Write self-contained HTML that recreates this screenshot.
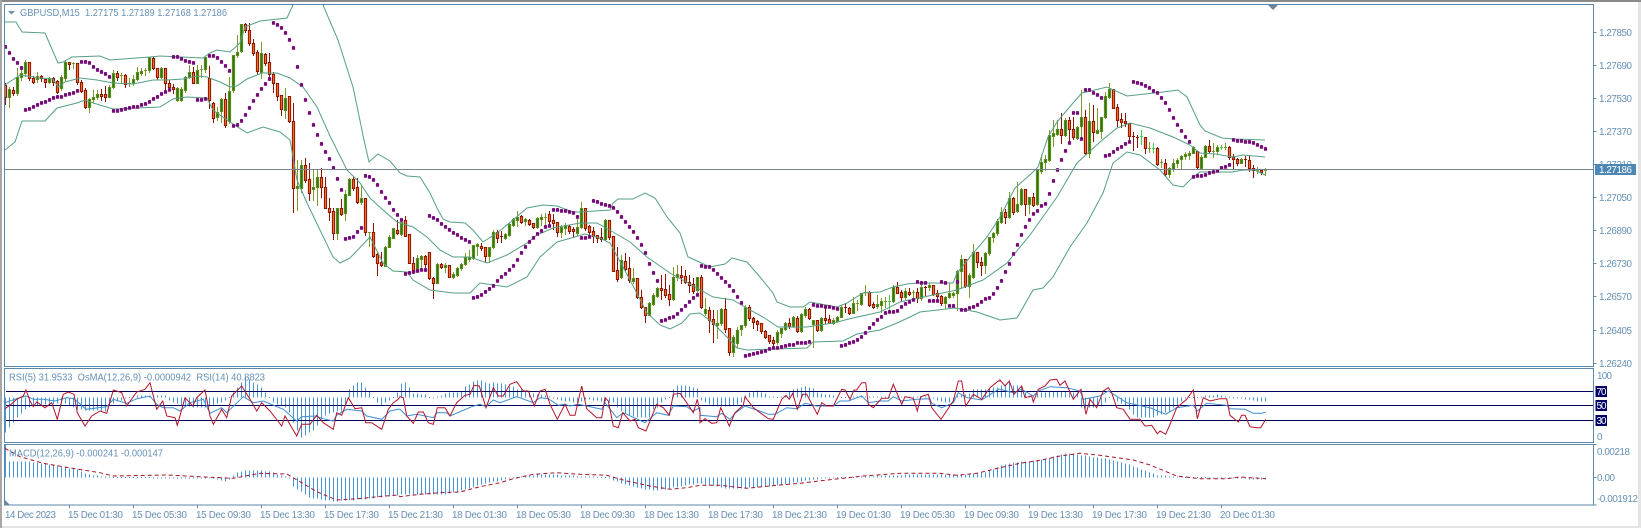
<!DOCTYPE html>
<html><head><meta charset="utf-8"><title>GBPUSD,M15</title>
<style>
html,body{margin:0;padding:0;background:#fff;width:1641px;height:528px;overflow:hidden}
svg{display:block;position:absolute;left:0;top:0;filter:blur(0.3px)}
text{font-family:"Liberation Sans",Arial,sans-serif;font-size:9.8px;fill:#6590b6;white-space:pre}
</style></head><body>
<svg width="1641" height="528" viewBox="0 0 1641 528" xmlns="http://www.w3.org/2000/svg">
<defs>
<clipPath id="cm"><rect x="5" y="5" width="1588" height="361"/></clipPath>
<clipPath id="cr"><rect x="5" y="369" width="1588" height="73"/></clipPath>
<clipPath id="cd"><rect x="5" y="445" width="1588" height="60"/></clipPath>
</defs>
<rect x="0" y="0" width="1641" height="2" fill="#8a8a8a"/>
<rect x="0" y="0" width="2" height="528" fill="#a8a8a8"/>
<rect x="1638" y="2" width="3" height="526" fill="#e4e4e4"/>
<rect x="2" y="526" width="1639" height="2" fill="#e4e4e4"/>
<g id="chart"></g>
<g fill="none" stroke="#5b88ab" stroke-width="1">
<rect x="4.5" y="4.5" width="1589" height="362"/>
<rect x="4.5" y="368.5" width="1589" height="74"/>
<rect x="4.5" y="444.5" width="1589" height="60.5"/>
<path d="M1593.5 32.5h3M1593.5 65.5h3M1593.5 98.5h3M1593.5 131.5h3M1593.5 164.5h3M1593.5 197.5h3M1593.5 230.5h3M1593.5 263.5h3M1593.5 296.5h3M1593.5 330.5h3M1593.5 363.5h3M1593.5 477.5h3M1593.5 505h3M1593.5 444.5h3M69.5 505v3M133.5 505v3M197.5 505v3M261.5 505v3M325.5 505v3M389.5 505v3M453.5 505v3M517.5 505v3M581.5 505v3M645.5 505v3M709.5 505v3M773.5 505v3M837.5 505v3M901.5 505v3M965.5 505v3M1029.5 505v3M1093.5 505v3M1157.5 505v3M1221.5 505v3"/>
</g>
<path d="M8 11h7l-3.5 3.5z" fill="#6c8fae"/>
<path d="M1268 5h10l-5 5z" fill="#6e8499"/>
<path d="M5 500l5 5h-5z" fill="#6e8499"/>
<text x="20" y="16" textLength="207" lengthAdjust="spacingAndGlyphs">GBPUSD,M15  1.27175 1.27189 1.27168 1.27186</text>
<text x="9" y="380.5" textLength="256" lengthAdjust="spacingAndGlyphs">RSI(5) 31.9533  OsMA(12,26,9) -0.0000942  RSI(14) 40.8823</text>
<text x="9" y="456.5" textLength="154" lengthAdjust="spacingAndGlyphs">MACD(12,26,9) -0.000241 -0.000147</text>
<g>
<text x="1599" y="36" textLength="33">1.27850</text>
<text x="1599" y="69" textLength="33">1.27690</text>
<text x="1599" y="102" textLength="33">1.27530</text>
<text x="1599" y="135" textLength="33">1.27370</text>
<text x="1599" y="168" textLength="33">1.27210</text>
<text x="1599" y="201" textLength="33">1.27050</text>
<text x="1599" y="234" textLength="33">1.26890</text>
<text x="1599" y="267" textLength="33">1.26730</text>
<text x="1599" y="300" textLength="33">1.26570</text>
<text x="1599" y="334" textLength="33">1.26405</text>
<text x="1599" y="367" textLength="33">1.26240</text>
</g>
<rect x="1595" y="164" width="41" height="11" fill="#4e87b4"/>
<text x="1599" y="173" textLength="33" style="fill:#fff">1.27186</text>
<text x="1597" y="379" textLength="15">100</text>
<text x="1597" y="440" textLength="5">0</text>
<rect x="1595.5" y="386" width="11.5" height="11" fill="#000066"/>
<rect x="1595.5" y="400" width="11.5" height="11" fill="#000066"/>
<rect x="1595.5" y="415" width="11.5" height="11" fill="#000066"/>
<text x="1596.5" y="395" textLength="10" style="fill:#fff">70</text>
<text x="1596.5" y="409" textLength="10" style="fill:#fff">50</text>
<text x="1596.5" y="424" textLength="10" style="fill:#fff">30</text>
<text x="1597" y="455" textLength="33">0.00218</text>
<text x="1597" y="481" textLength="18">0.00</text>
<text x="1597" y="502" textLength="41">-0.001912</text>
<g>
<text x="5" y="518" textLength="51">14 Dec 2023</text>
<text x="68" y="518" textLength="55">15 Dec 01:30</text>
<text x="132" y="518" textLength="55">15 Dec 05:30</text>
<text x="196" y="518" textLength="55">15 Dec 09:30</text>
<text x="260" y="518" textLength="55">15 Dec 13:30</text>
<text x="324" y="518" textLength="55">15 Dec 17:30</text>
<text x="388" y="518" textLength="55">15 Dec 21:30</text>
<text x="452" y="518" textLength="55">18 Dec 01:30</text>
<text x="516" y="518" textLength="55">18 Dec 05:30</text>
<text x="580" y="518" textLength="55">18 Dec 09:30</text>
<text x="644" y="518" textLength="55">18 Dec 13:30</text>
<text x="708" y="518" textLength="55">18 Dec 17:30</text>
<text x="772" y="518" textLength="55">18 Dec 21:30</text>
<text x="836" y="518" textLength="55">19 Dec 01:30</text>
<text x="900" y="518" textLength="55">19 Dec 05:30</text>
<text x="964" y="518" textLength="55">19 Dec 09:30</text>
<text x="1028" y="518" textLength="55">19 Dec 13:30</text>
<text x="1092" y="518" textLength="55">19 Dec 17:30</text>
<text x="1156" y="518" textLength="55">19 Dec 21:30</text>
<text x="1220" y="518" textLength="55">20 Dec 01:30</text>
</g>
</svg>
<script>
var C="r85,97,83,104 g89,97,87,107 r90,93,87,95 g77,93,68,95 g73,77,67,80 g62,73,60,76 r62,78,62,80 r78,82,76,83 g76,79,72,82 r76,78,75,81 r79,82,79,87 g78,82,77,83 r78,82,77,85 r81,92,80,93 g77,88,75,90 g62,78,60,80 r62,64,62,69 g63,64,62,68 r63,82,63,84 r82,91,80,92 r90,107,88,108 g99,107,98,112 g97,99,90,102 g94,97,90,99 r94,96,89,100 r94,97,86,101 g87,97,85,97 g73,87,70,88 r73,77,71,80 g75,76,73,83 r75,84,74,87 g83,84,78,86 g79,83,75,85 g72,79,67,80 g71,73,68,75 g70,71,68,75 g57,70,57,72 r58,68,57,69 r68,77,68,79 g68,77,67,78 r68,83,68,89 r83,87,80,90 r87,89,84,93 g88,100,87,101 g89,100,87,101 g77,90,76,92 g72,77,65,78 r72,83,67,83 g70,83,65,83 g69,70,65,77 g57,69,57,72 r78,100,66,108 r103,118,102,122 g112,117,107,120 g99,111,98,122 r99,125,93,127 g91,121,77,123 g55,90,55,92 g52,55,35,57 g24,51,24,52 r24,30,23,32 r30,43,23,45 r43,53,39,55 r52,71,50,74 g53,72,42,78 r54,63,53,65 r62,74,53,80 r74,83,72,92 r83,96,83,100 r95,109,95,115 g98,110,88,118 r96,121,96,122 r121,188,103,212 g186,188,160,210 g165,188,160,192 r165,180,158,182 r179,193,163,200 g187,189,170,200 g177,187,170,205 r177,187,168,197 r187,208,177,208 r208,212,198,220 r211,233,208,239 g208,233,208,239 r208,214,199,215 g194,213,190,220 g179,195,178,195 r179,188,177,190 r187,202,178,203 g198,202,185,204 r198,232,198,235 g232,233,232,246 r232,256,223,257 r254,263,253,275 r262,265,252,266 g247,266,246,266 g237,247,235,247 g228,238,228,238 r230,233,220,234 g222,234,218,235 r220,236,216,236 r234,263,234,263 r263,272,257,273 g258,271,255,272 g256,259,255,270 r256,264,255,271 r252,278,252,279 r278,283,277,298 g264,283,263,283 r264,267,263,268 g265,267,263,272 r265,277,265,277 g274,277,272,278 g268,275,267,276 g264,268,263,270 g257,264,253,265 g257,259,250,261 g245,258,245,259 g244,246,243,255 r246,248,243,250 r247,256,247,261 g247,256,247,262 g232,247,230,248 r232,238,230,242 r236,237,231,242 g234,238,233,239 g224,235,223,236 g219,225,218,226 g217,220,211,226 r216,222,215,223 g219,221,218,225 r220,224,219,225 r223,227,223,228 g218,227,217,228 g217,219,214,225 g217,218,213,227 r214,221,211,223 r220,223,214,229 r222,232,222,236 g227,232,225,237 g225,228,223,234 r226,231,225,233 r229,231,227,237 g227,233,218,235 g208,227,202,228 r208,228,208,230 r226,232,225,237 r231,236,227,242 r235,238,235,242 r237,239,228,241 g220,239,219,240 r220,237,220,239 r236,271,236,271 r270,279,247,281 g260,277,255,278 r261,269,253,270 r268,280,257,282 g278,281,268,283 r278,297,278,298 r297,307,290,308 r307,315,307,322 g303,315,302,315 g295,304,293,305 g288,296,287,297 r288,290,275,299 r289,295,274,297 r294,299,285,305 g277,299,267,300 g274,277,265,280 r275,277,266,283 r276,282,270,283 r282,285,275,292 r284,291,278,293 g277,290,277,292 r277,307,275,308 g309,313,298,315 r310,320,307,332 r319,324,310,342 g323,325,310,338 g309,323,308,325 r309,329,298,332 r328,352,328,355 g337,352,335,356 g330,343,327,347 g325,329,325,335 g307,325,305,327 r307,318,305,320 r318,322,317,328 r321,324,320,330 r323,331,323,333 r331,337,330,338 r335,341,335,343 r340,343,337,348 g332,342,330,344 g328,333,328,337 g323,329,322,330 r323,326,318,328 g317,326,316,327 r318,331,316,332 g314,331,313,332 g309,315,307,317 r309,318,308,319 g320,324,320,347 r320,330,320,331 g318,330,317,331 r318,320,308,323 r319,323,315,323 g320,323,318,324 g317,321,316,322 g307,317,305,317 r307,308,303,312 r308,313,307,314 g303,313,297,313 g303,304,300,310 g293,304,293,305 g292,293,285,295 r292,305,291,306 r304,307,302,308 g304,306,295,308 g301,305,298,312 g301,302,297,307 b301,301,295,310 g287,301,285,302 r287,293,282,293 r292,297,290,300 g291,297,288,299 r292,294,288,295 g292,293,290,297 r292,298,288,302 g287,298,285,300 r287,288,286,295 g285,287,283,290 r285,294,285,295 r293,296,290,298 r296,303,295,305 g297,303,296,308 g293,297,283,298 g293,295,292,297 g271,293,270,310 g259,271,255,287 r259,286,259,287 g275,286,273,297 g252,277,244,278 r252,262,252,267 r262,265,257,275 g253,265,252,273 g237,253,237,255 g233,237,232,242 g221,233,219,235 g212,222,207,223 r212,217,209,223 g198,217,192,218 r198,212,197,214 g204,211,182,212 g189,204,188,205 r189,204,189,215 g197,204,197,213 r197,205,193,206 g170,204,170,205 g162,171,155,173 g159,162,155,170 g135,160,130,161 g133,136,120,146 g129,134,120,135 r129,135,113,143 g120,135,118,136 r120,129,117,140 r129,137,117,139 g127,138,126,139 g117,126,90,140 r117,153,110,154 g121,153,103,157 r121,132,105,141 g130,133,108,133 g117,131,117,138 g96,117,92,118 g89,97,83,98 r89,108,89,108 r107,120,104,126 r119,122,113,127 r121,123,113,126 r123,136,123,140 r136,137,132,150 r137,138,135,147 b136,136,130,144 r137,148,137,153 g148,148,142,152 b148,148,143,152 r148,164,147,165 g162,162,159,167 r163,174,159,176 g168,174,167,177 g163,169,159,171 g160,163,158,167 g156,159,155,168 g154,156,152,159 g153,155,151,159 g147,153,146,153 r151,167,151,168 g157,168,155,168 g146,157,145,157 r146,151,140,152 g151,151,143,157 g147,151,145,153 b147,147,145,149 g147,147,143,149 r147,157,146,159 r157,159,154,168 r159,163,158,165 g159,163,158,163 r159,159,156,166 r160,168,156,171 r168,170,165,177 g170,170,167,173 r170,172,169,174 g170,171,168,175".split(" ");
var S=[47,53,59,63,68,110,109,107,105,103,102,100,98,97,97,95,94,93,91,62,62,63,67,70,72,74,77,111,111,110,109,108,107,107,105,104,102,99,97,94,92,90,57,57,59,61,62,63,100,100,99,56,56,58,62,66,71,126,125,121,115,108,101,95,89,84,79,23,25,28,33,40,48,67,85,100,113,125,135,144,152,159,168,179,190,239,238,237,232,228,176,177,180,185,192,198,203,210,215,220,274,273,272,271,270,270,216,218,220,224,227,230,233,235,238,240,242,298,297,295,292,289,286,281,277,274,270,266,260,253,247,242,238,234,231,227,226,210,210,211,211,212,213,217,238,238,237,201,202,204,205,206,208,212,217,222,227,232,238,245,253,264,273,281,321,320,318,317,314,310,306,302,298,295,266,267,267,270,274,278,282,286,291,297,303,356,355,354,353,352,351,349,348,348,347,346,345,345,343,343,343,342,305,306,306,307,307,308,309,346,345,343,342,340,337,333,328,324,320,317,313,312,312,311,307,304,302,300,282,283,283,301,301,301,282,283,306,306,282,310,310,308,307,305,302,299,298,294,288,281,272,264,254,245,235,227,220,214,211,206,204,194,181,170,160,151,143,113,113,139,90,90,93,95,98,156,155,152,149,147,144,142,82,83,84,86,88,91,93,98,103,110,118,125,131,137,142,177,176,176,175,173,172,171,168,167,165,140,141,141,142,142,143,145,147,149];
var U=[5,22,16,22,22,32,45,33,58,63,63,62,72,57,100,56,110,60,150,57,160,56,203,58,210,53,217,50,230,52,240,43,245,27,260,21,287,18,293,5,296,-10,320,-10,323,5,338,40,353,87,364,140,369,162,378,154,390,161,400,173,407,176,420,177,430,193,437,208,443,219,450,222,465,223,473,230,483,242,497,233,513,220,527,208,543,205,557,206,573,212,580,212,610,210,613,203,618,199,633,199,645,193,655,198,667,217,680,233,688,257,695,260,710,267,725,264,732,258,747,262,760,277,773,293,777,302,790,307,803,307,810,302,837,307,847,303,863,293,880,292,893,287,907,284,918,283,953,283,957,273,970,257,987,237,1000,217,1015,188,1032,173,1038,167,1048,137,1057,122,1073,103,1082,93,1107,87,1127,96,1163,92,1178,90,1187,97,1200,125,1205,131,1222,138,1235,139,1265,140];
var M=[5,85,20,75,40,78,53,79,58,87,65,82,80,78,97,80,113,83,133,84,153,80,167,80,183,79,197,76,207,77,220,82,230,87,237,86,247,79,262,73,277,73,290,78,303,87,317,107,330,136,347,170,360,183,370,198,383,210,397,222,413,227,427,237,440,250,453,257,470,257,487,263,507,255,527,243,537,235,553,228,580,223,597,223,613,232,630,242,647,257,670,273,697,288,713,297,733,300,750,310,763,317,778,327,807,327,833,323,853,318,880,312,900,302,933,295,957,290,983,280,1007,263,1030,235,1057,197,1077,163,1100,142,1117,128,1130,123,1150,128,1173,137,1190,145,1200,153,1215,154,1233,157,1243,155,1265,157];
var L=[5,150,15,142,22,121,45,121,57,108,77,103,85,100,90,102,113,109,160,107,173,99,187,97,207,98,213,110,227,120,247,133,263,127,280,132,290,140,297,180,307,203,320,230,333,257,340,263,350,258,370,237,383,263,393,271,407,272,413,280,430,290,453,293,470,293,480,283,507,287,527,277,540,257,557,242,585,234,600,238,610,243,630,280,647,313,660,325,670,329,682,323,690,314,700,313,713,323,727,337,737,348,747,350,807,348,813,342,843,341,857,334,880,330,897,323,910,317,920,312,955,308,977,312,1000,320,1017,318,1033,290,1043,288,1053,277,1070,247,1087,223,1103,193,1113,163,1127,152,1140,155,1160,170,1173,185,1183,187,1193,177,1200,172,1232,172,1243,170,1255,170,1265,175];
var OS=[0,-35,1,-30,2,-25,3,-20,4,-16,5,-12,6,-10,7,-8,10,-7,15,-6,18,-12,25,-14,26,-8,28,-4,31,0,32,2,40,2,41,-3,44,-8,47,-10,50,-10,52,-8,55,-3,56,0,58,10,60,20,62,15,64,10,66,0,67,-5,70,-10,71,-15,72,-25,73,-33,74,-40,75,-38,76,-35,77,-33,78,-28,79,-22,80,-18,82,-15,84,-14,85,-8,85.5,2,86,8,87,12,88,15,89,15,90,10,91,6,92,0,93,-5,94,-8,95,-5,96,-3,97,0,98,5,99,14,100,15,101,10,102,4,105,3,106,0,107,-1,108,1,109,2,110,4,111,5,113,5,114,6,115,11,116,13,117,16,118,17,119,17,120,15,121,14,122,15,123,14,124,14,125,13,126,11,127,11,128,8,129,8,130,6,131,5,132,4,133,3,134,3,135,2,136,1,137,-1,138,-2,139,-3,140,-4,141,-4,142,-5,143,-5,144,-4,145,-2,146,-2,147,-3,148,-3,149,-4,152,-5,153,-10,154,-14,155,-16,156,-18,157,-19,158,-20,161,-20,162,-12,163,-10,164,-5,165,-2,166,0,167,8,168,12,170,12,171,11,172,10,173,9,174,-3,176,-7,177,-8,178,-9,181,-9,182,-8,183,-7,184,-5,185,2,186,5,187,6,188,7,189,5,190,4,191,1,193,0,195,1,196,6,197,8,198,9,199,10,200,11,201,10,202,9,203,5,204,4,205,3,206,3,207,2,208,0,215,1,225,1,231,1,232,-1,233,-3,234,-4,235,-5,237,-5,238,2,239,3,240,3,241,4,242,8,245,8,246,9,247,10,248,10,249,12,250,13,251,15,252,12,253,12,254,10,255,5,256,2,257,2,258,4,262,6,268,5,269,-10,270,-11,271,-10,272,-10,273,-9,274,-9,275,-5,276,0,277,-2,278,-4,279,-6,280,-8,281,-12,282,-17,283,-20,287,-20,288,-18,289,-17,290,-15,291,-14,292,-10,293,-8,294,-4,295,-1,296,0,298,0,299,1,300,2,302,2,303,3,304,2,305,1,306,1,307,0,308,-1,309,-1,310,-2,311,-2,312,-3,313,-4,315,-4];
var MD=[0,33,1,16,5,16,10,14,15,10,18,8,20,4,22,2,24,1,28,0,44,-1,52,-1,55,-4,56,-2,58,5,60,7,62,7,66,6,68,3,70,1,71,-1,72,-9,76,-20,82,-24,90,-22,99,-17,105,-17,110,-17,115,-12,120,-6,125,-2,128,0,130,2,135,3,137,3,140,2,145,1,150,0,152,-3,155,-7,160,-12,163,-13,165,-12,170,-8,174,-6,180,-11,184,-11,190,-9,195,-7,200,-3,205,-1,210,0,215,1,220,2,230,3,236,3,240,3,245,5,248,10,249,12,252,15,256,16,260,18,264,23,266,24,268,23,272,20,276,18,280,14,284,8,288,2,292,1,296,0,305,-1,315,-2];
function seg(a){var o="";a.forEach(function(s){var ox=s[0],oy=s[1],p=s[2];for(var i=0;i<p.length;i+=2){o+=(o?"L":"M")+(ox+p[i]/3).toFixed(1)+" "+(oy+p[i+1]/3).toFixed(1);}});return o;}
function poly(p){var o="";for(var i=0;i<p.length;i+=2)o+=(i?"L":"M")+p[i]+" "+p[i+1];return o;}
function interp(t,i){for(var k=0;k<t.length-2;k+=2){if(i>=t[k]&&i<=t[k+2]){var f=(i-t[k])/((t[k+2]-t[k])||1);return t[k+1]+(t[k+3]-t[k+1])*f;}}return 0;}
var R5=seg([[0,366,[15,128,30,118,50,100,70,90,78,72,90,105,100,122,110,108,135,125,155,110,172,160,190,85,205,78,222,85,232,140,255,180,275,150,300,135,320,142,340,72,365,80,380,120,410,78,435,70,450,50,470,130,488,105,500,150,525,155,532,178,555,95,578,120,590,95,615,72,630,150,640,175,665,130,680,155,695,90,725,60,750,100,770,135,785,110,810,135,845,180,855,150,890,210,905,175,930,175,950,148,970,170,1000,190,1010,140,1025,148,1045,95,1065,128,1085,125,1097,170,1115,170,1145,190,1165,130,1180,110,1195,100]],
[400,366,[0,92,10,95,20,150,40,172,55,138,70,138,85,170,100,175,112,125,135,125,150,150,170,110,195,88,210,85,222,58,238,60,258,125,280,65,295,90,310,90,330,55,350,47,370,75,385,75,403,120,420,75,435,70,450,115,472,160,495,115,510,148,525,148,545,60,560,128,590,155,605,155,615,95,625,105,640,180,655,185,668,140,690,165,705,160,715,185,738,195,770,115,790,125,808,148,820,85,840,82,860,110,880,140,892,100,900,140]],
[700,366,[0,170,15,158,35,172,50,170,62,125,88,180,105,140,130,118,135,92,160,125,180,140,205,158,220,160,245,100,258,88,268,100,278,82,292,130,308,85,320,85,352,145,365,110,380,120,400,120,425,70,435,72,450,100,462,72,470,72,485,50,497,50,505,115,520,125,545,97,565,97,580,55,605,115,615,92,640,97,652,135,662,92,685,85,695,125,723,160,760,105,775,45,785,45,797,120,820,85,845,100,870,65,895,45,900,45]],
[1000,366,[0,42,15,60,28,45,42,85,65,60,75,95,95,90,100,108,115,70,135,60,150,42,170,40,180,58,195,45,220,100,243,70,258,145,270,100,290,125,310,75,325,65,335,80,350,125,370,130,390,160,420,160,435,180,455,178,472,203,480,195,497,205,512,170,530,125,560,100,580,72,592,158,610,95,630,105,660,98,680,98,690,148,715,168,725,148,735,148,750,182,770,185,782,185,797,160]]]);
var R14=seg([[0,366,[15,110,50,98,78,90,100,100,130,100,165,105,200,95,222,98,258,130,320,122,340,100,380,112,410,98,450,90,470,115,490,125,520,125,540,135,570,110,610,100,630,142,665,125,680,140,730,92,760,110,790,105,850,130,890,165,905,152,945,150,970,158,1000,165,1010,148,1040,130,1085,135,1100,150,1145,160,1170,135,1195,130]],
[400,366,[0,130,20,150,50,145,100,155,112,140,140,140,150,150,215,122,240,115,258,122,280,102,300,110,350,92,400,110,420,95,445,98,475,118,495,115,510,120,535,115,560,120,605,130,615,110,650,155,670,140,735,170,770,140,805,148,820,120,860,122,880,135,900,125]],
[700,366,[0,148,50,152,65,142,90,160,105,142,135,120,170,132,205,145,225,145,260,125,292,128,315,112,350,120,400,120,420,105,445,105,485,90,505,110,540,105,565,105,580,92,605,105,650,100,690,98,695,112,725,125,760,110,775,80,800,95,845,102,895,70]],
[1000,366,[0,70,40,80,65,70,100,90,115,75,150,62,200,65,240,75,250,100,300,90,325,75,380,110,450,125,497,145,530,125,580,118,592,135,620,112,680,118,690,128,735,130,760,142,785,142,797,138]]]);
var SG=seg([[0,340,[15,325,60,350,130,370,200,382,300,398,340,408,500,405,600,410,700,415,780,400,860,402,900,425,950,455,1010,480,1090,475,1130,470,1195,465]],
[400,366,[0,392,60,385,120,380,180,378,240,362,300,350,340,338,400,325,470,320,540,325,620,328,680,345,750,360,810,370,860,365,900,358]],
[700,366,[60,358,140,367,230,358,300,352,400,340,490,330,600,322,720,322,770,328,830,322,900,305]],
[1000,366,[60,292,120,283,180,270,240,262,300,268,400,282,450,297,530,330,600,338,680,338,720,333,797,338]]]);
var wr="",wg="",wb="",br="",bg="",dots="",os="",md="";
for(var i=0;i<C.length;i++){
 var c=C[i],t=c[0],v=c.slice(1).split(",").map(Number),x=5.5+4*i;
 var w="M"+x+" "+v[2]+"V"+(v[3]+1);
 if(t=="r")wr+=w;else if(t=="g")wg+=w;else wb+=w+"M"+(x-1.5)+" "+(v[0]+.5)+"h3";
 var h=Math.max(v[1]-v[0],0.01);
 var rc="M"+(x-1.1)+" "+(v[0]+.5)+"h2.2v"+h+"h-2.2z";
 if(v[1]-v[0]<=1){var ln="M"+(x-1.5)+" "+(v[0]+.5)+"h3";if(t=="r")wr+=ln;else if(t=="g")wg+=ln;}
 else if(t=="r")br+=rc;else if(t=="g")bg+=rc;
}
S.forEach(function(y,i){var x=5.5+4*i;dots+="M"+(x-.9)+" "+(y-2)+"h1.8l.7 .8v3h-3.2v-3z";});
for(var i=0;i<316;i++){var x=5.5+4*i,a=Math.round(interp(OS,i)),b=Math.round(interp(MD,i));
 if(a!=0)os+="M"+x+" 397.5V"+(397.5-a);else os+="M"+x+" 397V398";
 if(b!=0)md+="M"+x+" 477.5V"+(477.5-b);else md+="M"+x+" 477V478";
}
var H=''
+'<g clip-path="url(#cm)">'
+'<path d="'+wg+'" stroke="#7d9a2f" fill="none"/>'
+'<path d="'+wr+'" stroke="#8c1400" fill="none"/>'
+'<path d="'+wb+'" stroke="#3fd24a" fill="none"/>'
+'<path d="'+bg+'" fill="#2c7a0c" stroke="#5d8c1c"/>'
+'<path d="'+br+'" fill="#f56a1e" stroke="#8c1400"/>'
+'<path d="'+poly(U)+'" stroke="#559f86" fill="none"/>'
+'<path d="'+poly(M)+'" stroke="#559f86" fill="none"/>'
+'<path d="'+poly(L)+'" stroke="#559f86" fill="none"/>'
+'<path d="'+dots+'" fill="#760c78"/>'
+'<path d="M5 169.5H1593" stroke="#76858f"/>'
+'</g>'
+'<g clip-path="url(#cr)">'
+'<path d="'+os+'" stroke="#4a95d0" fill="none"/>'
+'<path d="M6 391.5H1593M6 405.5H1593M6 420.5H1593" stroke="#00005c" fill="none"/>'
+'<path d="'+R14+'" stroke="#3e8ed2" fill="none"/>'
+'<path d="'+R5+'" stroke="#b3142c" fill="none"/>'
+'</g>'
+'<g clip-path="url(#cd)">'
+'<path d="'+md+'" stroke="#4a95d0" fill="none"/>'
+'<path d="'+SG+'" stroke="#a81425" stroke-dasharray="4 3" fill="none"/>'
+'</g>';
document.getElementById("chart").innerHTML=H;
</script>
</body></html>
